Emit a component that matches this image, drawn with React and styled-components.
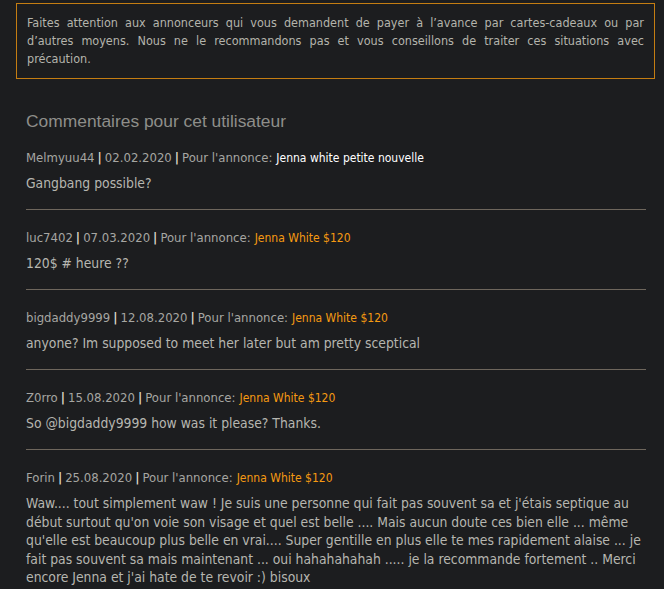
import React from "react";
import styled, { createGlobalStyle } from "styled-components";

const Global = createGlobalStyle`
  html, body { margin: 0; padding: 0; background: #1c1d1f; }
  body { font-family: "DejaVu Sans Condensed", "DejaVu Sans", sans-serif; }
`;

const Page = styled.div`
  padding: 3px 9px 0 16px;
`;

const Notice = styled.div`
  border: 1px solid #c47d12;
  padding: 10px 10px 10px 10px;
  color: #b4b4ac;
  font-size: 12.5px;
  line-height: 18px;
  text-align: justify;
`;

const Section = styled.section`
  padding: 32px 9px 0 10px;
`;

const Title = styled.h2`
  margin: 0 0 19px;
  font-family: "Liberation Sans", Arial, sans-serif;
  font-weight: normal;
  font-size: 17.4px;
  line-height: 20px;
  color: #8e8e8a;
`;

const Comment = styled.div`
  padding: 0 0 16.5px;
  margin-bottom: 20px;
  border-bottom: ${(p) => (p.$last ? "none" : "1px solid #6e665c")};
`;

const Meta = styled.div`
  font-size: 13px;
  line-height: 16px;
  color: #a6a6a2;
  margin-bottom: 8px;
`;

const Sep = styled.span`
  color: #dcd6c8;
  font-weight: bold;
  margin: 0 3px;
`;

const Ad = styled.a`
  color: ${(p) => (p.$white ? "#ffffff" : "#f59a12")};
  font-size: 12px;
  text-decoration: none;
  margin-left: 4px;
`;

const Body = styled.div`
  font-size: 13.8px;
  line-height: 18.5px;
  color: #b6b6b0;
`;

const comments = [
  { user: "Melmyuu44", date: "02.02.2020", ad: "Jenna white petite nouvelle", white: true, text: "Gangbang possible?" },
  { user: "luc7402", date: "07.03.2020", ad: "Jenna White $120", text: "120$ # heure ??" },
  { user: "bigdaddy9999", date: "12.08.2020", ad: "Jenna White $120", text: "anyone? Im supposed to meet her later but am pretty sceptical" },
  { user: "Z0rro", date: "15.08.2020", ad: "Jenna White $120", text: "So @bigdaddy9999 how was it please? Thanks." },
  {
    user: "Forin",
    date: "25.08.2020",
    ad: "Jenna White $120",
    text: "Waw.... tout simplement waw ! Je suis une personne qui fait pas souvent sa et j'étais septique au début surtout qu'on voie son visage et quel est belle .... Mais aucun doute ces bien elle ... même qu'elle est beaucoup plus belle en vrai.... Super gentille en plus elle te mes rapidement alaise ... je fait pas souvent sa mais maintenant ... oui hahahahahah ..... je la recommande fortement .. Merci encore Jenna et j'ai hate de te revoir :) bisoux",
  },
];

export default function App() {
  return (
    <>
      <Global />
      <Page>
        <Notice>
          Faites attention aux annonceurs qui vous demandent de payer à l’avance par cartes-cadeaux ou par d’autres moyens. Nous ne le recommandons pas et vous conseillons de traiter ces situations avec précaution.
        </Notice>
        <Section>
          <Title>Commentaires pour cet utilisateur</Title>
          {comments.map((c, i) => (
            <Comment key={i} $last={i === comments.length - 1}>
              <Meta>
                {c.user}
                <Sep>|</Sep>
                {c.date}
                <Sep>|</Sep>
                Pour l'annonce:
                <Ad href="#" $white={c.white}>{c.ad}</Ad>
              </Meta>
              <Body>{c.text}</Body>
            </Comment>
          ))}
        </Section>
      </Page>
    </>
  );
}
